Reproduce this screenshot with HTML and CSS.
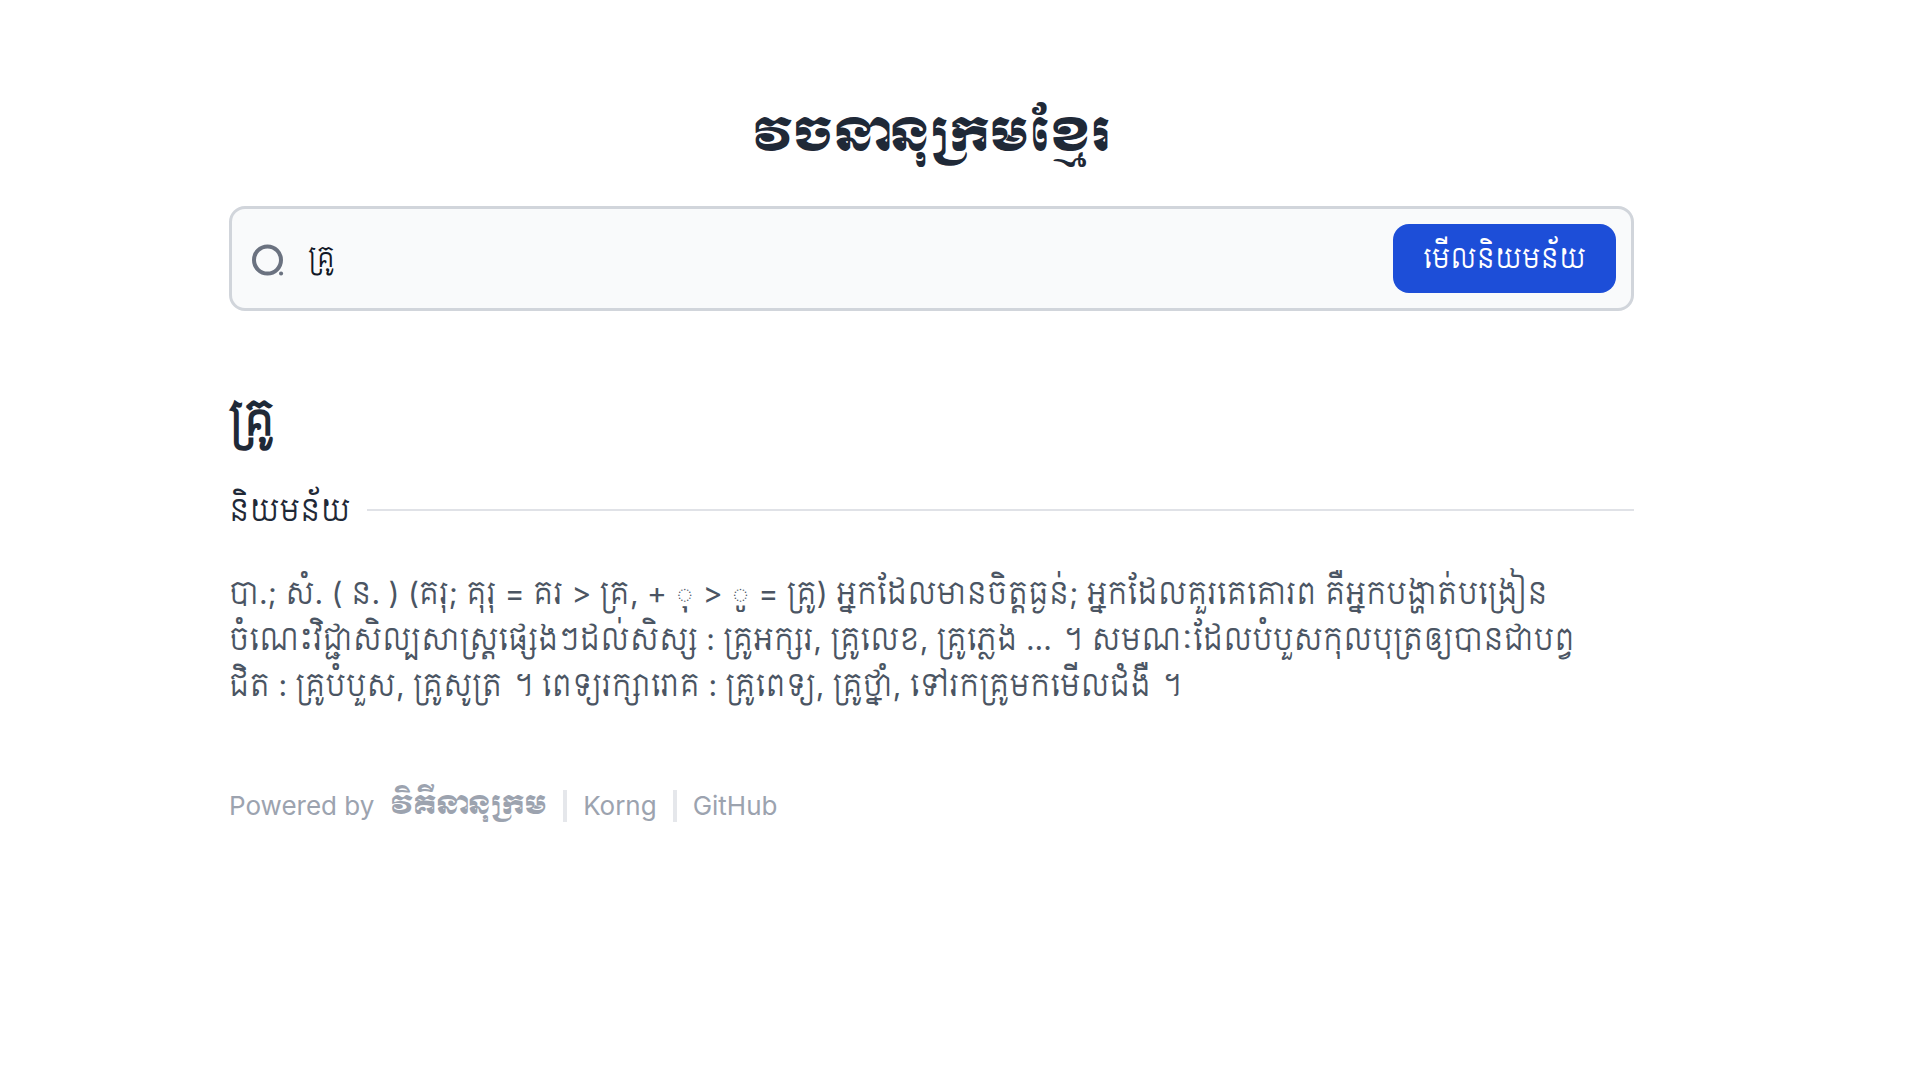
FILE: index.html
```html
<!DOCTYPE html>
<html lang="km">
<head>
    <meta charset="UTF-8">
    <meta name="viewport" content="width=device-width, initial-scale=1.0">
    <title>វចនានុក្រមខ្មែរ</title>
    <link rel="stylesheet" href="styles.css">
</head>
<body>
    <main class="container">
        <h1 class="title">វចនានុក្រមខ្មែរ</h1>

        <form class="search">
            <label class="search-icon" for="word" aria-label="ស្វែងរក">
                <svg width="36" height="36" viewBox="0 0 36 36" fill="none" stroke="currentColor" stroke-width="4" stroke-linecap="round">
                    <circle cx="17.5" cy="19" r="13.5"/>
                    <path d="M31 32.5h.1"/>
                </svg>
            </label>
            <input type="text" id="word" class="search-input" value="គ្រូ">
            <button type="submit" class="search-btn">មើលនិយមន័យ</button>
        </form>

        <article class="entry">
            <h2 class="word">គ្រូ</h2>
            <div class="section">
                <h3 class="section-title">និយមន័យ</h3>
                <hr class="rule">
            </div>
            <p class="definition">
                បា.; សំ. ( ន. ) (គរុ; គុរុ = គរ &gt; គ្រ, + <span class="vowel">ុ</span> &gt; <span class="vowel">ូ</span> = គ្រូ) អ្នកដែលមានចិត្តធ្ងន់; អ្នកដែលគួរគេគោរព គឺអ្នកបង្ហាត់បង្រៀន<br>
                ចំណេះវិជ្ជាសិល្បសាស្ត្រផ្សេងៗដល់សិស្ស : គ្រូអក្សរ, គ្រូលេខ, គ្រូភ្លេង ... ។ សមណៈដែលបំបួសកុលបុត្រឲ្យបានជាបព្វ<br>
                ជិត : គ្រូបំបួស, គ្រូសូត្រ ។ ពេទ្យរក្សារោគ : គ្រូពេទ្យ, គ្រូថ្នាំ, ទៅរកគ្រូមកមើលជំងឺ ។
            </p>
        </article>

        <footer class="footer">
            <span>Powered by</span>
            <a href="#" class="brand">វិគីនានុក្រម</a>
            <a href="#" class="divided">Korng</a>
            <a href="#" class="divided">GitHub</a>
        </footer>
    </main>
    <script>
        document.querySelector('.search').addEventListener('submit', function(e) {
            e.preventDefault();
        });
    </script>
</body>
</html>
```

FILE: styles.css
```css
* {
    margin: 0;
    padding: 0;
    box-sizing: border-box;
}

body {
    font-family: Inter, Siemreap, "Noto Sans Khmer", "Noto Sans", sans-serif;
    background: white;
    color: #1f2937;
}

.container {
    margin: 0 286px 0 229px;
    padding-top: 101px;
}

.title {
    text-align: center;
    font-family: Moul, "Noto Sans Khmer", "Noto Sans", sans-serif;
    font-size: 46px;
    font-weight: 400;
    line-height: 72px;
    margin-bottom: 33px;
}

.search {
    display: flex;
    align-items: center;
    padding: 15px 15px 15px 18px;
    border: 3px solid #d1d5db;
    border-radius: 16px;
    background: #f9fafb;
}

.search-icon {
    display: flex;
    color: #6b7280;
}

.search-input {
    flex: 1;
    min-width: 0;
    height: 64px;
    margin-left: 22px;
    border: none;
    outline: none;
    background: transparent;
    font: inherit;
    font-size: 27px;
    line-height: 60px;
    color: #111827;
}

.search-btn {
    height: 69px;
    padding: 2px 30px 0;
    border: none;
    border-radius: 16px;
    background: #1d4ed8;
    color: white;
    font: inherit;
    font-size: 27px;
    cursor: pointer;
}

.entry {
    margin-top: 71px;
}

.word {
    font-size: 46px;
    line-height: 72px;
}

.section {
    display: flex;
    align-items: center;
    gap: 16px;
    margin-top: 32px;
}

.section-title {
    font-size: 30px;
    font-weight: 400;
    line-height: 48px;
}

.rule {
    flex: 1;
    border: none;
    border-top: 2px solid #e0e2e7;
}

.definition {
    margin-top: 36px;
    font-size: 30px;
    line-height: 46px;
    color: #4b5563;
}

.vowel {
    font-family: "Noto Sans Khmer", sans-serif;
}

.footer {
    display: flex;
    align-items: center;
    gap: 16px;
    margin-top: 82px;
    font-family: Inter, sans-serif;
    font-size: 26px;
    line-height: 32px;
    color: #9ca3af;
}

.footer a {
    color: inherit;
    text-decoration: none;
}

.footer .brand {
    font-family: Moul, "Noto Sans Khmer", sans-serif;
    font-size: 26px;
}

.divided {
    padding-left: 16px;
    border-left: 4px solid #e5e7eb;
}
```
